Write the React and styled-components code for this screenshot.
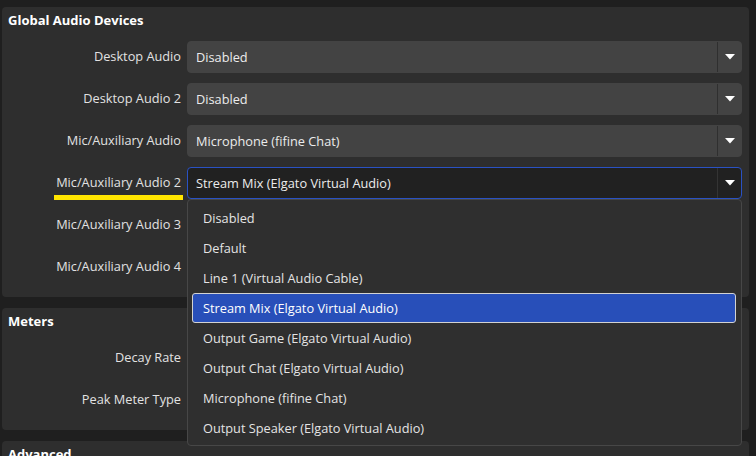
import React from "react";
import styled, { createGlobalStyle } from "styled-components";

const GlobalStyle = createGlobalStyle`
  html, body { margin: 0; padding: 0; background: #1f1f1f; }
  body {
    width: 756px; height: 456px; overflow: hidden;
    font-family: "Open Sans", "Noto Sans", sans-serif;
    font-size: 12.75px; color: #e4e4e4;
  }
`;

const Page = styled.div`
  display: flex;
  flex-direction: column;
  gap: 11px;
  padding: 7px 7px 0 2px;
`;

const Group = styled.section`
  background: #2e2e2e;
  border-radius: 4px;
  padding: 0 7px 14px 0;
  display: flex;
  flex-direction: column;
  gap: 10px;
`;

const GroupTitle = styled.h2`
  margin: 0 0 -2px 0;
  padding-left: 6px;
  height: 26px;
  line-height: 27px;
  font-size: 13px;
  font-weight: 700;
  color: #ffffff;
`;

const Row = styled.div`
  display: grid;
  grid-template-columns: 179px 1fr;
  column-gap: 6px;
  height: 32px;
  position: relative;
`;

const Label = styled.div`
  display: flex;
  align-items: center;
  justify-content: flex-end;
  color: #e2e2e2;
`;

const LabelText = styled.span`
  position: relative;
  line-height: 18px;
  top: -1px;
  ${(p) =>
    p.$highlight &&
    `&::after {
      content: "";
      position: absolute;
      left: -2px;
      right: -2px;
      top: calc(100% + 4px);
      height: 5px;
      background: #ffe500;
    }`}
`;

const Combo = styled.div`
  position: relative;
  display: flex;
  align-items: stretch;
  border-radius: 4px;
  background: ${(p) => (p.$active ? "#212121" : "#434343")};
  border: 1px solid ${(p) => (p.$active ? "#2a52c4" : "#434343")};
  box-sizing: border-box;
`;

const ComboText = styled.div`
  flex: 1;
  display: flex;
  align-items: center;
  padding-left: 8px;
  color: #ececec;
`;

const ArrowBox = styled.div`
  width: 23px;
  display: flex;
  align-items: center;
  justify-content: center;
  border-left: 1px solid ${(p) => (p.$active ? "#343434" : "#2f2f2f")};
`;

const Popup = styled.ul`
  position: absolute;
  top: calc(100% + 1px);
  left: -1px;
  right: -1px;
  margin: 0;
  padding: 3px 5px 2px 4px;
  list-style: none;
  background: #2f2f2f;
  border: 1px solid #474747;
  border-radius: 4px;
  z-index: 5;
`;

const PopupItem = styled.li`
  height: 30px;
  box-sizing: border-box;
  display: flex;
  align-items: center;
  padding-left: 10px;
  border-radius: 3px;
  color: ${(p) => (p.$selected ? "#ffffff" : "#e4e4e4")};
  background: ${(p) => (p.$selected ? "#284fb9" : "transparent")};
  border: 1px solid ${(p) => (p.$selected ? "#d2d2d2" : "transparent")};
`;

const Arrow = () => (
  <svg width="10" height="6" viewBox="0 0 10 6">
    <path d="M0 0 H10 L5 5.5 Z" fill="#ffffff" />
  </svg>
);

const options = [
  "Disabled",
  "Default",
  "Line 1 (Virtual Audio Cable)",
  "Stream Mix (Elgato Virtual Audio)",
  "Output Game (Elgato Virtual Audio)",
  "Output Chat (Elgato Virtual Audio)",
  "Microphone (fifine Chat)",
  "Output Speaker (Elgato Virtual Audio)",
];

const audioRows = [
  { label: "Desktop Audio", value: "Disabled" },
  { label: "Desktop Audio 2", value: "Disabled" },
  { label: "Mic/Auxiliary Audio", value: "Microphone (fifine Chat)" },
  { label: "Mic/Auxiliary Audio 2", value: "Stream Mix (Elgato Virtual Audio)", active: true },
  { label: "Mic/Auxiliary Audio 3", value: "" },
  { label: "Mic/Auxiliary Audio 4", value: "" },
];

const meterRows = [
  { label: "Decay Rate", value: "" },
  { label: "Peak Meter Type", value: "" },
];

const FieldRow = ({ label, value, active }) => (
  <Row>
    <Label>
      <LabelText $highlight={active}>{label}</LabelText>
    </Label>
    <Combo $active={active}>
      <ComboText>{value}</ComboText>
      <ArrowBox $active={active}>
        <Arrow />
      </ArrowBox>
      {active && (
        <Popup>
          {options.map((o) => (
            <PopupItem key={o} $selected={o === value}>
              {o}
            </PopupItem>
          ))}
        </Popup>
      )}
    </Combo>
  </Row>
);

export default function App() {
  return (
    <>
      <GlobalStyle />
      <Page>
        <Group>
          <GroupTitle>Global Audio Devices</GroupTitle>
          {audioRows.map((r) => (
            <FieldRow key={r.label} {...r} />
          ))}
        </Group>
        <Group>
          <GroupTitle>Meters</GroupTitle>
          {meterRows.map((r) => (
            <FieldRow key={r.label} {...r} />
          ))}
        </Group>
        <Group>
          <GroupTitle>Advanced</GroupTitle>
        </Group>
      </Page>
    </>
  );
}
